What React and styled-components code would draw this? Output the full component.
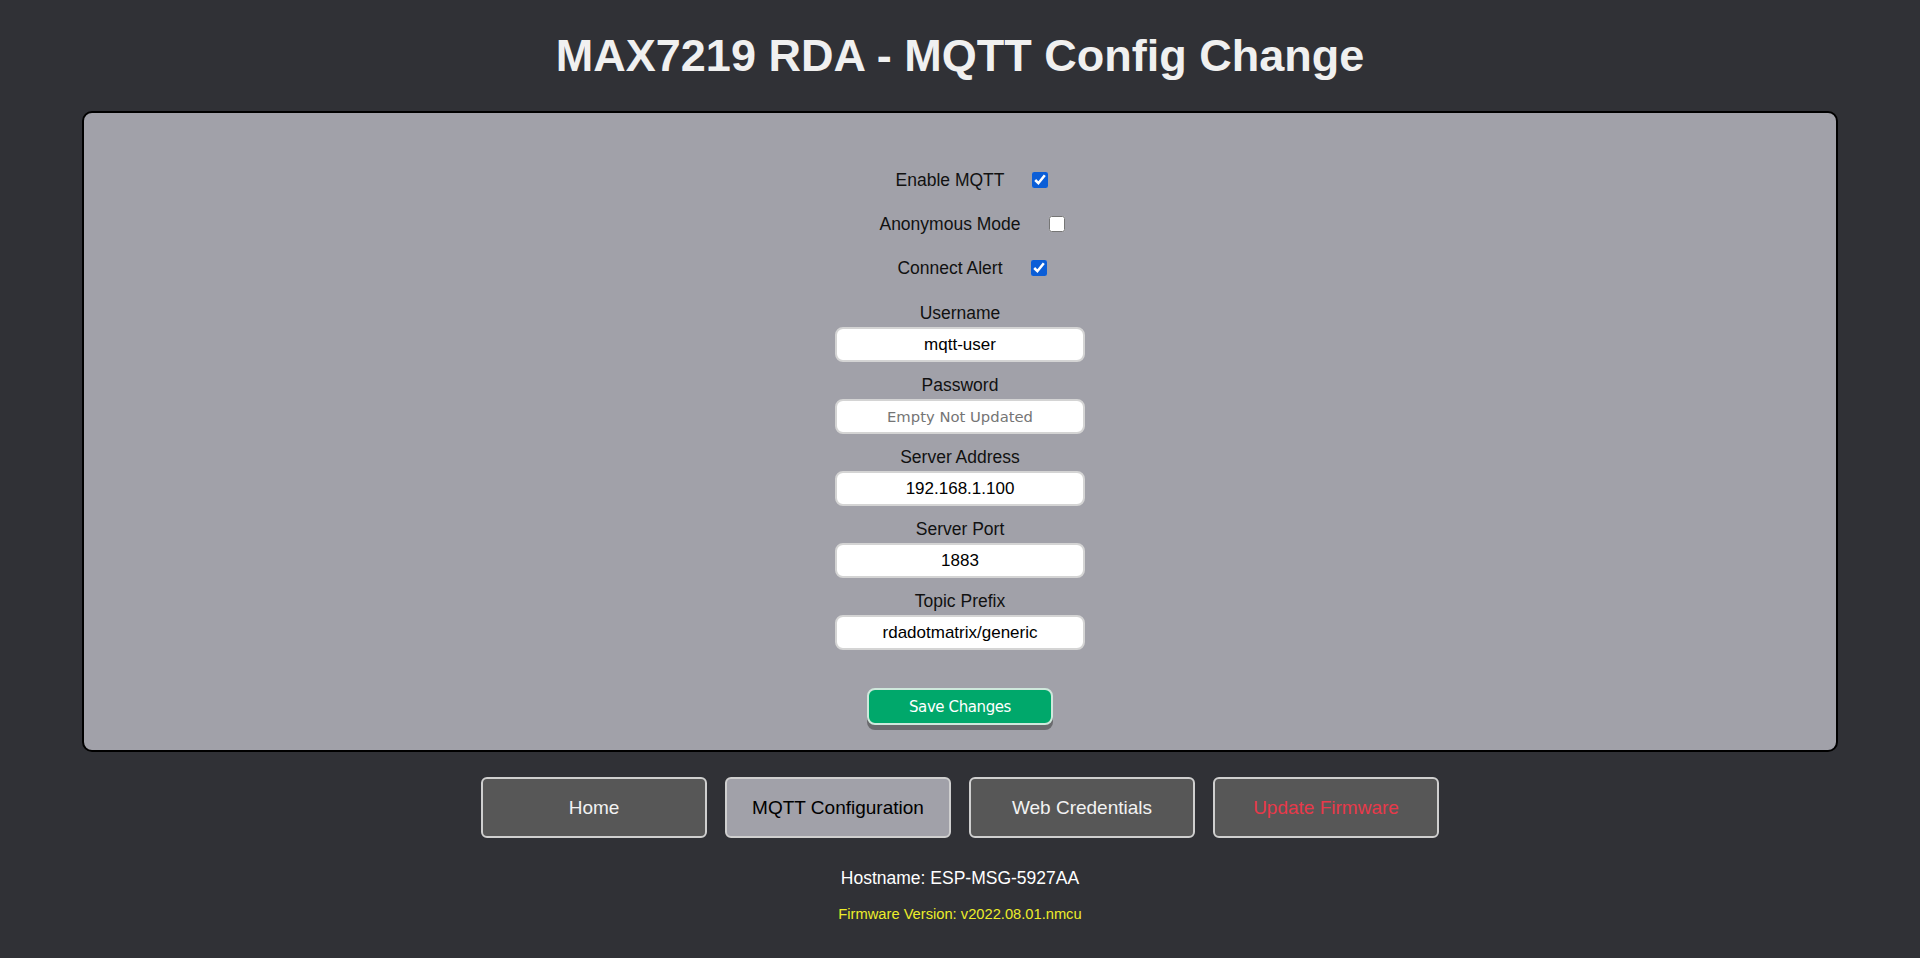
import React from 'react'
import styled, { createGlobalStyle } from 'styled-components';

const GlobalStyle = createGlobalStyle`
  html, body {
    margin: 0;
    padding: 0;
    background: #303136;
    font-family: "Liberation Sans", Arial, sans-serif;
  }
`;

const Page = styled.div`
  display: flex;
  flex-direction: column;
  align-items: center;
  padding: 0 82px 30px;
  min-height: 958px;
  box-sizing: border-box;
`;

const Title = styled.h1`
  margin: 32px 0 31px;
  font-size: 45px;
  font-weight: bold;
  color: #f0f0f0;
  line-height: 48px;
`;

const Panel = styled.form`
  align-self: stretch;
  background: #a1a1a9;
  border: 2px solid #000;
  border-radius: 10px;
  padding: 45px 0 25px;
  display: flex;
  flex-direction: column;
  align-items: center;
`;

const Checks = styled.div`
  display: flex;
  flex-direction: column;
  align-items: center;
  margin-bottom: 9px;
`;

const CheckRow = styled.label`
  display: flex;
  align-items: center;
  height: 44px;
  font-size: 17.5px;
  color: #111;
  margin-left: 24px;
`;

const Check = styled.input`
  width: 16px;
  height: 16px;
  margin: 0 0 0 28px;
  accent-color: #0b5ed7;
`;

const Field = styled.div`
  display: flex;
  flex-direction: column;
  align-items: center;
  margin-top: 4px;
`;

const FieldLabel = styled.label`
  font-size: 17.5px;
  color: #111;
  line-height: 20px;
  margin-bottom: 4px;
`;

const TextInput = styled.input`
  width: 250px;
  height: 35px;
  box-sizing: border-box;
  border: 2px solid #d4d4d4;
  border-radius: 8px;
  background: #fff;
  text-align: center;
  font-family: "Liberation Sans", Arial, sans-serif;
  font-size: 17px;
  color: #000;
  outline: none;
  margin-bottom: 9px;

  &::placeholder {
    font-family: "DejaVu Sans", Verdana, sans-serif;
    font-size: 14.8px;
    color: #757575;
  }
`;

const SaveButton = styled.button`
  margin-top: 29px;
  width: 186px;
  height: 37px;
  background: #00a86b;
  color: #fff;
  border: 2px solid #cfe8dc;
  border-radius: 8px;
  box-shadow: 0 5px 0 #6a6a6e;
  font-family: "DejaVu Sans", Verdana, sans-serif;
  font-size: 15px;
  letter-spacing: -0.4px;
`;

const Nav = styled.nav`
  display: flex;
  gap: 18px;
  margin-top: 25px;
`;

const NavButton = styled.a`
  width: 226px;
  height: 61px;
  box-sizing: border-box;
  display: flex;
  align-items: center;
  justify-content: center;
  border: 2px solid #cfcfcf;
  border-radius: 6px;
  background: ${p => (p.$active ? '#a1a1a9' : '#575757')};
  color: ${p => (p.$danger ? '#e8394a' : p.$active ? '#000' : '#f2f2f2')};
  font-size: 19px;
  text-decoration: none;
`;

const Hostname = styled.div`
  margin-top: 30px;
  color: #fff;
  font-size: 17.5px;
`;

const Firmware = styled.div`
  margin-top: 17px;
  color: #ecec2a;
  font-size: 14.7px;
`;

export default function App() {
    return (
        <>
            <GlobalStyle />
            <Page>
                <Title>MAX7219 RDA - MQTT Config Change</Title>

                <Panel onSubmit={e => e.preventDefault()}>
                    <Checks>
                        <CheckRow>Enable MQTT<Check type="checkbox" defaultChecked /></CheckRow>
                        <CheckRow>Anonymous Mode<Check type="checkbox" /></CheckRow>
                        <CheckRow>Connect Alert<Check type="checkbox" defaultChecked /></CheckRow>
                    </Checks>

                    <Field>
                        <FieldLabel>Username</FieldLabel>
                        <TextInput defaultValue="mqtt-user" />
                    </Field>
                    <Field>
                        <FieldLabel>Password</FieldLabel>
                        <TextInput type="password" placeholder="Empty Not Updated" />
                    </Field>
                    <Field>
                        <FieldLabel>Server Address</FieldLabel>
                        <TextInput defaultValue="192.168.1.100" />
                    </Field>
                    <Field>
                        <FieldLabel>Server Port</FieldLabel>
                        <TextInput defaultValue="1883" />
                    </Field>
                    <Field>
                        <FieldLabel>Topic Prefix</FieldLabel>
                        <TextInput defaultValue="rdadotmatrix/generic" />
                    </Field>

                    <SaveButton type="submit">Save Changes</SaveButton>
                </Panel>

                <Nav>
                    <NavButton href="#">Home</NavButton>
                    <NavButton href="#" $active>MQTT Configuration</NavButton>
                    <NavButton href="#">Web Credentials</NavButton>
                    <NavButton href="#" $danger>Update Firmware</NavButton>
                </Nav>

                <Hostname>Hostname: ESP-MSG-5927AA</Hostname>
                <Firmware>Firmware Version: v2022.08.01.nmcu</Firmware>
            </Page>
        </>
    )
}
